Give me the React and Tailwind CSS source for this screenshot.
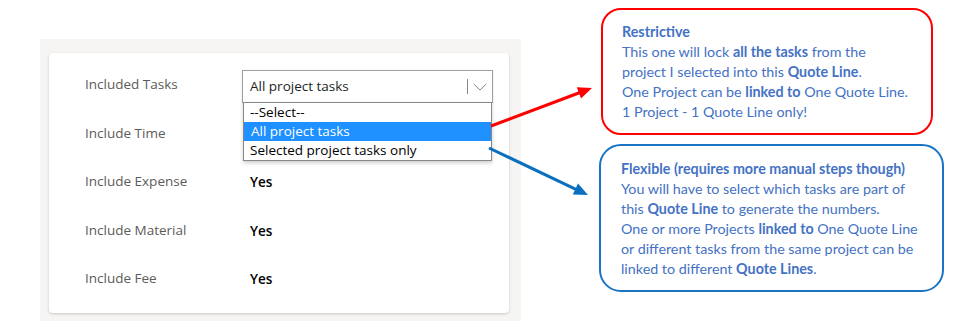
const rows = [
  { label: 'Include Time', value: null },
  { label: 'Include Expense', value: 'Yes' },
  { label: 'Include Material', value: 'Yes' },
  { label: 'Include Fee', value: 'Yes' },
]

const options = ['--Select--', 'All project tasks', 'Selected project tasks only']

export default function App() {
  return (
    <div className="relative w-[975px] h-[334px] bg-white flex overflow-hidden font-['Open_Sans',sans-serif]">
      {/* form panel */}
      <div className="mt-[39px] ml-[40px] w-[481px] h-[282px] bg-[#f6f5f4] pt-[14px] pl-[9px] shrink-0">
        <div className="w-[460px] h-[260px] bg-white rounded shadow-[0_1px_3px_rgba(0,0,0,0.18)] pt-[17px] pl-[36px]">
          <div className="flex h-[48.5px]">
            <div className="w-[157px] pt-[4px] text-[13.5px] leading-5 text-[#5c5b5a]">Included Tasks</div>
            <div className="relative z-10">
              <div className="w-[251px] h-[33px] border border-[#a19f9d] flex items-center pl-[7px] text-[13.5px] text-[#201f1e] shadow-[0_1px_2px_rgba(0,0,0,0.12)]">
                <span className="flex-1">All project tasks</span>
                <span className="w-px h-[15px] bg-[#8a8886]" />
                <svg className="mx-[5px]" width="14" height="8" viewBox="0 0 14 8">
                  <polyline points="0.5,0.8 7,7 13.5,0.8" fill="none" stroke="#8a8886" strokeWidth="1" />
                </svg>
              </div>
              <div className="absolute left-px top-[32px] w-[249px] bg-white border border-[#8a8886] shadow-[0_2px_4px_rgba(0,0,0,0.2)] text-[13.5px] leading-[19px] text-black">
                {options.map((o, i) => (
                  <div key={o} className={i === 1 ? 'bg-[#1e90ff] text-white pl-[7px]' : 'pl-[6px]'}>
                    {o}
                  </div>
                ))}
              </div>
            </div>
          </div>
          {rows.map(r => (
            <div key={r.label} className="flex h-[48.5px]">
              <div className="w-[157px] pt-[4px] text-[13.5px] leading-5 text-[#5c5b5a]">{r.label}</div>
              {r.value && (
                <div className="pl-[8px] pt-[5px] text-[13.5px] leading-5 font-semibold text-black">{r.value}</div>
              )}
            </div>
          ))}
        </div>
      </div>

      {/* callouts */}
      <div className="flex flex-col items-start font-['Lato',sans-serif] text-[14.3px] leading-5 text-[#4472c4]">
        <div className="mt-[8px] ml-[80px] w-[332px] h-[127px] border-2 border-[#ff0000] rounded-[20px] pt-[12px] pl-[19px]">
          <p className="font-bold">Restrictive</p>
          <p>This one will lock <b>all the tasks</b> from the</p>
          <p>project I selected into this <b>Quote Line</b>.</p>
          <p>One Project can be <b>linked to</b> One Quote Line.</p>
          <p>1 Project - 1 Quote Line only!</p>
        </div>
        <div className="mt-[9px] ml-[78px] w-[345px] h-[148px] border-2 border-[#1a74c4] rounded-[22px] pt-[13px] pl-[20px]">
          <p className="font-bold">Flexible (requires more manual steps though)</p>
          <p>You will have to select which tasks are part of</p>
          <p>this <b>Quote Line</b> to generate the numbers.</p>
          <p>One or more Projects <b>linked to</b> One Quote Line</p>
          <p>or different tasks from the same project can be</p>
          <p>linked to different <b>Quote Lines</b>.</p>
        </div>
      </div>

      {/* arrows */}
      <svg className="absolute inset-0 pointer-events-none z-20" width="975" height="334" viewBox="0 0 975 334">
        <line x1="491" y1="126" x2="580" y2="92.5" stroke="#ff0000" strokeWidth="3" />
        <polygon points="592,88 581,98.5 576.8,87.3" fill="#ff0000" />
        <line x1="489" y1="148" x2="577" y2="189.8" stroke="#0a6fbf" strokeWidth="3" />
        <polygon points="588,195 572.8,194.4 578,183.6" fill="#0a6fbf" />
      </svg>
    </div>
  )
}
